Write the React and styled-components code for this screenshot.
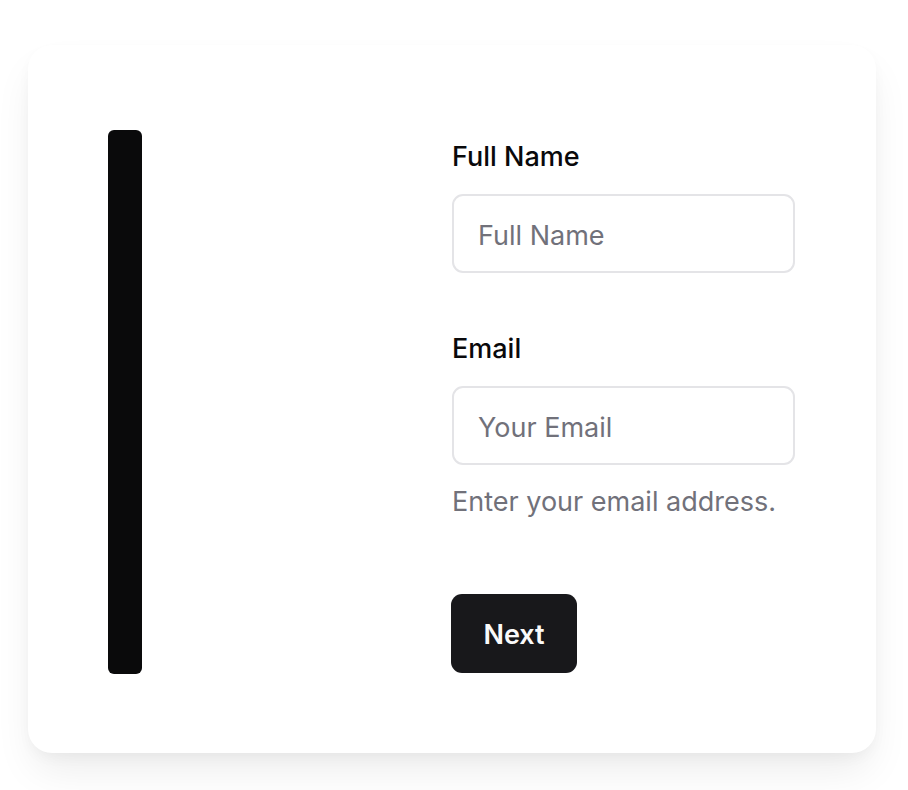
import React from "react";
import styled, { createGlobalStyle } from "styled-components";

const Global = createGlobalStyle`
  html, body { margin: 0; padding: 0; background: #ffffff; }
  body { font-family: Inter, "Noto Sans", "Liberation Sans", sans-serif; -webkit-font-smoothing: antialiased; }
  * { box-sizing: border-box; }
`;

const Page = styled.div`
  padding: 45px 32px 37px 28px;
`;

const Card = styled.div`
  width: 848px;
  height: 708px;
  background: #ffffff;
  border-radius: 24px;
  box-shadow: 0 22px 40px -6px rgba(0, 0, 0, 0.08), 0 6px 16px -4px rgba(0, 0, 0, 0.05);
  padding: 85px 80px 79px 80px;
  display: grid;
  grid-template-columns: 1fr 1fr;
`;

const Bar = styled.div`
  width: 34px;
  height: 100%;
  background: #0a0a0b;
  border-radius: 6px;
`;

const Form = styled.form`
  display: flex;
  flex-direction: column;
`;

const Field = styled.div`
  display: flex;
  flex-direction: column;
  margin-bottom: ${(p) => p.$mb}px;
`;

const Label = styled.label`
  font-size: 27px;
  line-height: 36px;
  font-weight: 500;
  color: #09090b;
  margin-top: 9px;
  margin-bottom: 19px;
`;

const Input = styled.input`
  width: 343px;
  height: 79px;
  border: 2px solid #e4e4e7;
  border-radius: 11px;
  padding: 3px 24px 0 24px;
  font-family: inherit;
  font-size: 27px;
  color: #09090b;
  background: #fff;
  outline: none;
  &::placeholder { color: #71717a; }
`;

const Help = styled.p`
  margin: 19px 0 0 0;
  font-size: 27px;
  line-height: 36px;
  color: #71717a;
`;

const Button = styled.button`
  align-self: flex-start;
  width: 126px;
  height: 79px;
  margin-left: -1px;
  padding: 2px 0 0 0;
  border: none;
  border-radius: 11px;
  background: #18181b;
  color: #fafafa;
  font-family: inherit;
  font-size: 27px;
  font-weight: 600;
  cursor: pointer;
`;

export default function App() {
  return (
    <>
      <Global />
      <Page>
        <Card>
          <Bar />
          <Form onSubmit={(e) => e.preventDefault()}>
            <Field $mb={49}>
              <Label htmlFor="name">Full Name</Label>
              <Input id="name" placeholder="Full Name" />
            </Field>
            <Field $mb={74}>
              <Label htmlFor="email">Email</Label>
              <Input id="email" placeholder="Your Email" />
              <Help>Enter your email address.</Help>
            </Field>
            <Button type="submit">Next</Button>
          </Form>
        </Card>
      </Page>
    </>
  );
}
